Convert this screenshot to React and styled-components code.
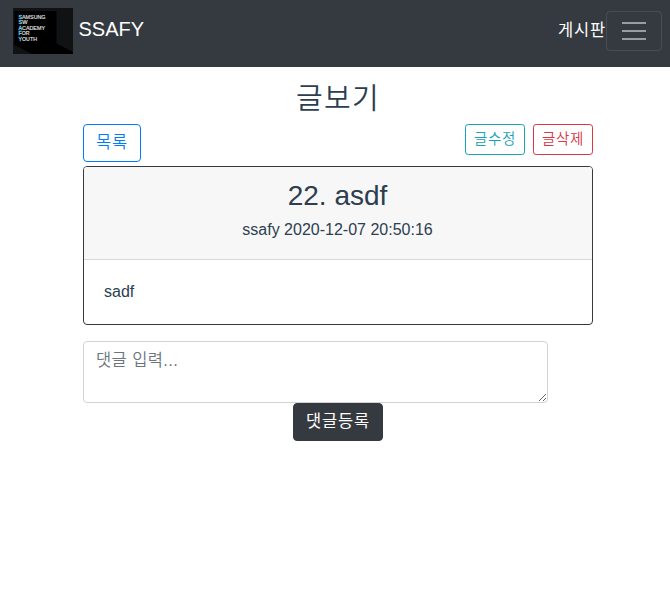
import React from "react";
import styled, { createGlobalStyle } from "styled-components";

const Global = createGlobalStyle`
  *, *::before, *::after { box-sizing: border-box; }
  body {
    margin: 0;
    background: #fff;
    color: #2c3e50;
    font: 400 16px/24px "Liberation Sans", "Noto Sans CJK KR", sans-serif;
  }
`;

const Navbar = styled.nav`
  display: flex;
  align-items: center;
  height: 67px;
  padding: 0 8px 5px 13px;
  background: #343a40;
  color: #fff;
`;

const Brand = styled.div`
  display: flex;
  align-items: center;
  gap: 5.5px;
  margin-right: auto;
  font-size: 20px;
  line-height: 30px;
`;

const BrandName = styled.span`
  padding-bottom: 4px;
`;

const NavLink = styled.span`
  padding-bottom: 2px;
  font-size: 16.5px;
  letter-spacing: 0.82px;
`;

const Logo = styled.svg`
  display: block;
  width: 60px;
  height: 46px;
`;

const Toggler = styled.button`
  display: flex;
  align-items: center;
  justify-content: center;
  width: 56px;
  height: 40px;
  padding: 0;
  border: 1px solid rgba(255, 255, 255, 0.1);
  border-radius: 4px;
  background: transparent;
`;

const Container = styled.main`
  display: flex;
  flex-direction: column;
  width: 510px;
  margin: 13px auto 0 83px;
`;

const PageTitle = styled.h1`
  margin: 0 0 7px;
  padding-top: 1px;
  font-size: 29px;
  font-weight: 350;
  line-height: 36px;
  letter-spacing: 1.3px;
  text-align: center;
`;

const Toolbar = styled.div`
  display: flex;
  align-items: flex-start;
  gap: 8px;
  margin-bottom: 4px;
`;

const Spacer = styled.div`
  flex: 1;
`;

const Button = styled.button`
  height: ${(p) => (p.$small ? 31 : 38)}px;
  padding: ${(p) => (p.$small ? "0 8px" : "0 12px 2px")};
  border: 1px solid ${(p) => p.$color};
  border-radius: ${(p) => (p.$small ? 3.2 : 4)}px;
  background: ${(p) => (p.$solid ? p.$color : "transparent")};
  color: ${(p) => (p.$solid ? "#fff" : p.$color)};
  font: inherit;
  font-size: ${(p) => (p.$small ? 14.5 : 16.5)}px;
  font-weight: ${(p) => (p.$solid ? 400 : 350)};
  line-height: 1.5;
  letter-spacing: ${(p) => (p.$small ? 0.66 : 0.82)}px;
  white-space: nowrap;
`;

const Card = styled.article`
  margin-bottom: 16px;
  border: 1px solid #343a40;
  border-radius: 4px;
  overflow: hidden;
`;

const CardHeader = styled.header`
  height: 93px;
  padding: 12px 21px 12px 20px;
  border-bottom: 1px solid rgba(0, 0, 0, 0.125);
  background: #f7f7f7;
  text-align: center;
`;

const PostTitle = styled.h2`
  margin: 0 0 8px;
  font-size: 28px;
  font-weight: 400;
  line-height: 33.6px;
`;

const Meta = styled.div`
  line-height: 18px;
`;

const CardBody = styled.div`
  height: 64px;
  padding: 20px;
`;

const CommentForm = styled.form`
  display: flex;
  flex-direction: column;
  align-items: center;
`;

const CommentInput = styled.textarea`
  align-self: flex-start;
  display: block;
  width: 465px;
  height: 62px;
  padding: 6px 12px;
  border: 1px solid #ced4da;
  border-radius: 4px;
  color: #495057;
  font: inherit;
  font-size: 16.5px;
  font-weight: 350;
  letter-spacing: 0.4px;
  resize: vertical;
  &::placeholder { color: #6c757d; opacity: 1; }
`;

const LogoText = styled.text`
  fill: #e4e4e4;
  font: 400 5.6px "Liberation Sans", sans-serif;
  stroke: #e4e4e4;
  stroke-width: 0.15px;
`;

const LogoInitial = styled.tspan`
  fill: #6cc4e0;
  stroke: #6cc4e0;
  stroke-width: 0.35px;
`;

const logoLines = [
  ["SAMSUNG", 27],
  ["SW", 9],
  ["ACADEMY", 26.5],
  ["FOR", 11],
  ["YOUTH", 18.5],
];

export default function App() {
  return (
    <>
      <Global />
      <Navbar>
        <Brand>
          <Logo viewBox="0 0 60 46">
            <rect width="60" height="46" fill="#111214" />
            <path d="M1.5 3H43.5V35.5L60 44V46H19L1.5 37Z" fill="#000" />
            {logoLines.map(([line, width], i) => (
              <LogoText key={line} x="5.5" y={10.6 + i * 5.6} textLength={width} lengthAdjust="spacingAndGlyphs">
                <LogoInitial>{line[0]}</LogoInitial>{line.slice(1)}
              </LogoText>
            ))}
          </Logo>
          <BrandName>SSAFY</BrandName>
        </Brand>
        <NavLink>게시판</NavLink>
        <Toggler aria-label="메뉴">
          <svg width="30" height="30" viewBox="0 0 30 30" fill="none" stroke="rgba(255,255,255,0.5)" strokeWidth="2" strokeLinecap="butt">
            <path d="M3 7h24M3 15h24M3 23h24" />
          </svg>
        </Toggler>
      </Navbar>
      <Container>
        <PageTitle>글보기</PageTitle>
        <Toolbar>
          <Button $color="#007bff">목록</Button>
          <Spacer />
          <Button $small $color="#17a2b8">글수정</Button>
          <Button $small $color="#dc3545">글삭제</Button>
        </Toolbar>
        <Card>
          <CardHeader>
            <PostTitle>22. asdf</PostTitle>
            <Meta>ssafy 2020-12-07 20:50:16</Meta>
          </CardHeader>
          <CardBody>sadf</CardBody>
        </Card>
        <CommentForm>
          <CommentInput placeholder="댓글 입력..." />
          <Button type="button" $solid $color="#343a40">댓글등록</Button>
        </CommentForm>
      </Container>
    </>
  );
}
